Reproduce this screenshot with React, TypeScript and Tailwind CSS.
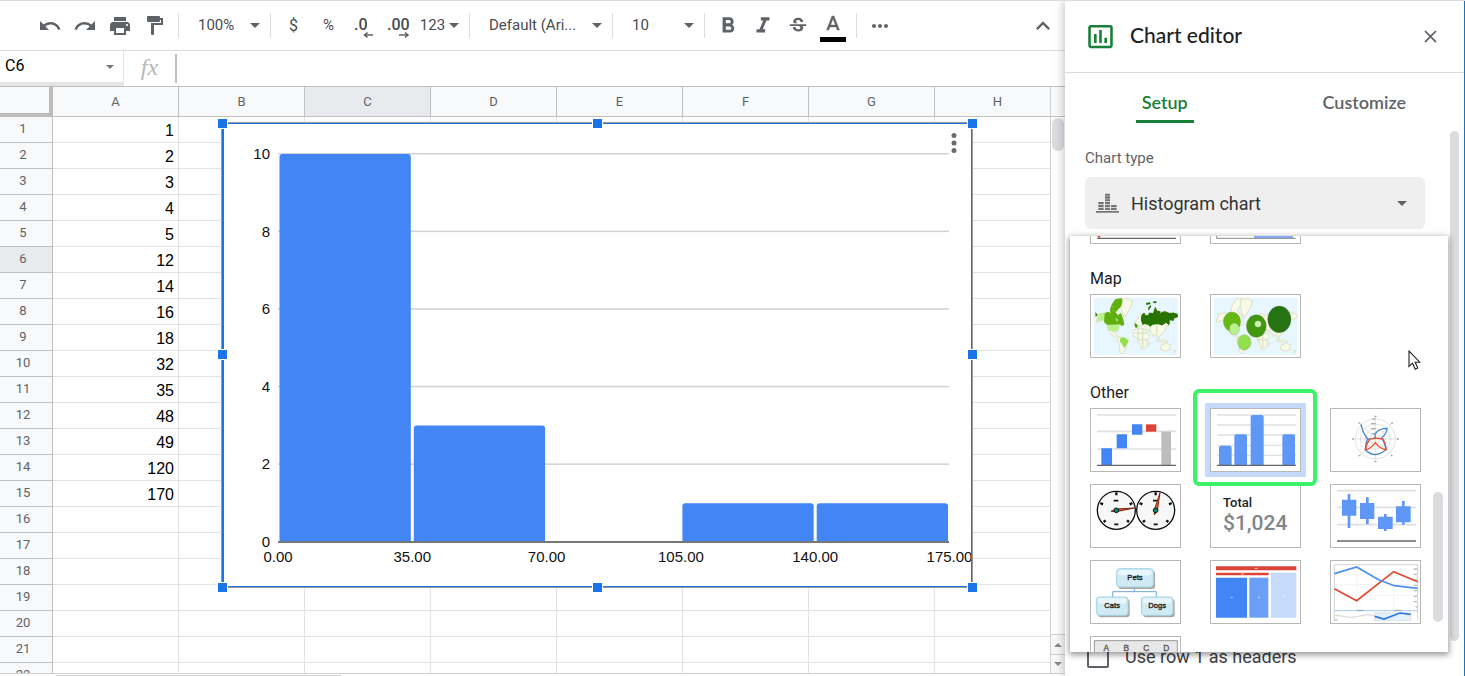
import { useState } from "react";
import type { ReactNode } from "react";
import {
  MdClose,
  MdFormatBold,
  MdFormatItalic,
  MdFormatPaint,
  MdInsertChartOutlined,
  MdKeyboardArrowUp,
  MdMoreHoriz,
  MdPrint,
  MdRedo,
  MdStrikethroughS,
  MdUndo,
} from "react-icons/md";

const COLUMNS = ["A", "B", "C", "D", "E", "F", "G", "H"];
const VALUES = [1, 2, 3, 4, 5, 12, 14, 16, 18, 32, 35, 48, 49, 120, 170];
const ROWS = Array.from({ length: 22 }, (_, i) => i + 1);
const ACTIVE = { column: "C", row: 6 };

// Histogram buckets, 35 wide
const BUCKETS = [10, 3, 0, 1, 1];
const X_TICKS = ["0.00", "35.00", "70.00", "105.00", "140.00", "175.00"];
const Y_TICKS = [0, 2, 4, 6, 8, 10];

const PLOT = { left: 56, right: 727, bottom: 419, bucket: 134.3, unit: 38.8 };

function Caret({ className = "" }: { className?: string }) {
  return (
    <svg viewBox="0 0 10 5" className={`pointer-events-none h-[5px] w-[10px] ${className}`} fill="#5f6368">
      <path d="M0 0h10L5 5z" />
    </svg>
  );
}

function Separator() {
  return <div className="ml-[6px] mr-[5px] h-[25px] w-px shrink-0 bg-[#dadce0]" />;
}

function ToolButton({ label, children }: { label: string; children: ReactNode }) {
  return (
    <button type="button" aria-label={label} className="flex h-9 w-[35px] shrink-0 items-center justify-center">
      {children}
    </button>
  );
}

function ToolSelect({ label, value, className }: { label: string; value: string; className: string }) {
  return (
    <div className={`relative flex shrink-0 items-center ${className}`}>
      <select aria-label={label} className="h-9 w-full appearance-none bg-transparent pr-6 pl-[14px] text-[15px] outline-none">
        <option>{value}</option>
      </select>
      <Caret className="absolute right-1" />
    </div>
  );
}

function Toolbar() {
  return (
    <div className="flex h-[50px] shrink-0 items-center border-b border-[#dadce0] pl-8 text-[#494c50]">
      <ToolButton label="Undo"><MdUndo size={24} color="#5f6368" /></ToolButton>
      <ToolButton label="Redo"><MdRedo size={24} color="#5f6368" /></ToolButton>
      <ToolButton label="Print"><MdPrint size={24} color="#5f6368" /></ToolButton>
      <ToolButton label="Paint format">
        <svg viewBox="0 0 16 19" className="h-[19px] w-4" fill="#5f6368">
          <path d="M1 0h11q1 0 1 1v1h3v7H7v9q0 1-1 1H5q-1 0-1-1V7h10V4h-1v1q0 1-1 1H1Q0 6 0 5V1q0-1 1-1z" />
        </svg>
      </ToolButton>
      <Separator />
      <ToolSelect label="Zoom" value="100%" className="w-20" />
      <Separator />
      <ToolButton label="Format as currency"><span className="text-base">$</span></ToolButton>
      <ToolButton label="Format as percent"><span className="text-[15px]">%</span></ToolButton>
      <ToolButton label="Decrease decimal places">
        <svg viewBox="0 0 26 26" className="size-[26px]">
          <text x="3" y="17" className="text-base font-medium" fill="#494c50">.0</text>
          <path d="M22 22h-8M16.500 19.500l-3 2.500 3 2.500" fill="none" stroke="#5f6368" strokeWidth="1.600" />
        </svg>
      </ToolButton>
      <ToolButton label="Increase decimal places">
        <svg viewBox="0 0 26 26" className="size-[26px]">
          <text x="1" y="17" className="text-base font-medium" fill="#494c50">.00</text>
          <path d="M13 22h8M19 19.500l3 2.500-3 2.500" fill="none" stroke="#5f6368" strokeWidth="1.600" />
        </svg>
      </ToolButton>
      <button type="button" className="flex h-9 w-[47px] shrink-0 items-center justify-center gap-1 text-[15px]">
        123
        <Caret />
      </button>
      <Separator />
      <ToolSelect label="Font" value="Default (Ari..." className="w-[131px]" />
      <Separator />
      <ToolSelect label="Font size" value="10" className="w-20" />
      <Separator />
      <ToolButton label="Bold"><MdFormatBold size={26} color="#5f6368" /></ToolButton>
      <ToolButton label="Italic"><MdFormatItalic size={26} color="#5f6368" /></ToolButton>
      <ToolButton label="Strikethrough"><MdStrikethroughS size={22} color="#5f6368" /></ToolButton>
      <ToolButton label="Text color">
        <svg viewBox="0 0 26 32" className="h-8 w-[26px]">
          <path
            fill="#5f6368"
            stroke="#5f6368"
            strokeWidth=".4"
            d="M12 6 6.500 20h2.250l1.120-3h6.250l1.120 3h2.250L14 6zm-1.380 9L13 8.670 15.380 15z"
          />
          <path fill="#000" d="M0 27h26v5H0z" />
        </svg>
      </ToolButton>
      <Separator />
      <ToolButton label="More"><MdMoreHoriz size={24} color="#5f6368" /></ToolButton>
      <button type="button" aria-label="Hide the menus" className="mr-2 ml-auto">
        <MdKeyboardArrowUp size={28} color="#5f6368" />
      </button>
    </div>
  );
}

function FormulaBar() {
  return (
    <div className="flex h-9 shrink-0 border-b border-[#c0c0c0]">
      <div className="relative flex w-[124px] items-center border-r border-b-4 border-[#e4e4e4]">
        <input aria-label="Name box" defaultValue="C6" className="w-24 pb-px pl-[5px] text-base text-black outline-none" />
        <svg viewBox="0 0 8 4" className="absolute right-[9px] h-1 w-2" fill="#777"><path d="M0 0h8L4 4z" /></svg>
      </div>
      <label htmlFor="formula" className="w-[51px] text-center font-['Liberation_Serif'] text-2xl text-[#b8b8b8] italic">fx</label>
      <input id="formula" className="my-[3px] flex-1 border-l-2 border-[#c0c0c0] px-2 outline-none" />
    </div>
  );
}

const HANDLES = [
  "-left-[5px] -top-[5px]",
  "left-1/2 -ml-[5px] -top-[5px]",
  "-right-[6px] -top-[5px]",
  "-left-[5px] top-1/2 -mt-[6px]",
  "-right-[6px] top-1/2 -mt-[6px]",
  "-left-[5px] -bottom-[6px]",
  "left-1/2 -ml-[5px] -bottom-[6px]",
  "-right-[6px] -bottom-[6px]",
];

function Histogram() {
  return (
    <div className="absolute top-9 left-[222px] h-[464px] w-[750px] bg-white outline outline-[#9a9a9a]">
      <div className="size-full border border-l-2 border-[#1a73e8]">
        <svg viewBox="2 1 747 462" className="size-full" fontFamily="Liberation Sans, sans-serif" fontSize="15" fill="#111">
          {Y_TICKS.map((tick) => {
            const y = PLOT.bottom - tick * PLOT.unit;
            return (
              <g key={tick}>
                <rect x={PLOT.left} y={y - 1} width={PLOT.right - PLOT.left} height="1.500" fill="#d2d2d2" />
                <text x="48" y={y + 5} textAnchor="end">{tick}</text>
              </g>
            );
          })}
          {BUCKETS.map((count, i) => {
            if (!count) return null;
            const x = PLOT.left + 1.5 + i * PLOT.bucket;
            const h = count * PLOT.unit;
            const top = PLOT.bottom - h;
            return (
              <path
                key={i}
                d={`M${x} ${PLOT.bottom}V${top + 3}q0-3 3-3h125.300q3 0 3 3V${PLOT.bottom}z`}
                fill="#4285f4"
              />
            );
          })}
          <rect x={PLOT.left} y={PLOT.bottom - 1} width={PLOT.right - PLOT.left} height="2" fill="#777" />
          {X_TICKS.map((tick, i) => (
            <text key={tick} x={PLOT.left + i * PLOT.bucket} y="439" textAnchor="middle">{tick}</text>
          ))}
        </svg>
      </div>
      <button type="button" aria-label="Chart options" className="absolute top-[10px] right-[13px]">
        <svg viewBox="0 0 10 20" className="h-5 w-[10px]" fill="#6b6b6b">
          <circle cx="5" cy="2.500" r="2.500" /><circle cx="5" cy="10" r="2.500" /><circle cx="5" cy="17.500" r="2.500" />
        </svg>
      </button>
      {HANDLES.map((place) => (
        <div key={place} className={`absolute size-[11px] border border-white bg-[#1a73e8] ${place}`} />
      ))}
    </div>
  );
}

function Sheet() {
  return (
    <div className="flex min-h-0 flex-1">
      <div className="relative min-w-0 flex-1 overflow-hidden border-r border-b border-[#d0d0d0]">
        <table className="w-[1061px] table-fixed border-separate border-spacing-0">
          <thead>
            <tr className="h-[30px] text-[13px] text-[#5f6368]">
              <th aria-label="Select all" className="w-[53px] border-r-4 border-b-4 border-[#bcbcbc] bg-[#f8f9fa]" />
              {COLUMNS.map((name) => (
                <th
                  key={name}
                  className={`w-[126px] border-r border-b border-[#c0c0c0] p-0 font-normal ${name === ACTIVE.column ? "bg-[#e8eaed]" : "bg-[#f8f9fa]"}`}
                >
                  {name}
                </th>
              ))}
            </tr>
          </thead>
          <tbody>
            {ROWS.map((row) => (
              <tr key={row} className="h-[26px]">
                <th
                  className={`border-r border-b border-[#c0c0c0] p-0 pr-[6px] pb-px text-[13px] leading-5 font-normal text-[#5f6368] ${row === ACTIVE.row ? "bg-[#e8eaed]" : "bg-[#f8f9fa]"}`}
                >
                  {row}
                </th>
                {COLUMNS.map((name) => (
                  <td
                    key={name}
                    className="border-r border-b border-[#e2e3e3] p-0 pr-1 text-right align-bottom font-['Liberation_Sans'] text-base leading-[22px] text-black"
                  >
                    {name === "A" ? VALUES[row - 1] : null}
                  </td>
                ))}
              </tr>
            ))}
          </tbody>
        </table>
        <Histogram />
      </div>
      <div className="flex w-[14px] flex-col border-b border-[#d0d0d0]">
        <div className="h-[30px] border-b border-[#c0c0c0] bg-[#f8f9fa]" />
        <div className="mx-px mt-px h-[33px] rounded-full bg-[#dadce0]" />
        <button type="button" aria-label="Scroll up" className="mt-auto flex h-5 items-center justify-center border-t border-[#d0d0d0] bg-[#f8f8f8]">
          <svg viewBox="0 0 8 4" className="h-1 w-2" fill="#888"><path d="M0 4h8L4 0z" /></svg>
        </button>
        <button type="button" aria-label="Scroll down" className="flex h-[19px] items-center justify-center border-t border-[#d0d0d0] bg-[#f8f8f8]">
          <svg viewBox="0 0 8 4" className="h-1 w-2" fill="#888"><path d="M0 0h8L4 4z" /></svg>
        </button>
      </div>
    </div>
  );
}

const LAND = [
  "M42 72 60 70 78 68 82 48 95 28 112 26 108 46 98 62 112 78 118 106 104 108 100 124 88 127 96 138 106 144 100 147 82 136 70 122 66 104 56 90 44 96 34 98z",
  "M108 32 125 26 142 32 140 50 132 62 120 84 113 72 108 52z",
  "M100 142 112 142 132 150 122 178 112 192 106 192 104 168 98 152z",
  "M144 122 165 116 184 122 196 140 188 150 184 172 172 182 164 160 160 146 146 140z",
  "M150 100 160 84 168 70 176 76 190 76 206 70 212 54 224 66 240 64 278 74 276 84 262 90 252 96 250 106 244 114 238 128 226 136 222 148 214 132 206 142 200 128 188 120 166 116 152 112z",
  "M228 168 244 160 258 166 254 182 240 184 228 178z",
  "M216 148 228 152 240 150 250 156 236 158 220 156z",
  "M268 180 274 184 268 191z",
  "M192 158 196 160 192 170z",
];

const RUSSIA =
  "M172 76 178 70 182 78 192 78 194 70 206 72 212 54 216 64 226 66 224 72 240 66 256 72 266 70 278 74 278 82 268 84 266 92 254 90 252 104 244 98 232 106 220 102 204 104 196 110 190 104 180 102 174 104 170 90z";

function WorldBase() {
  return (
    <>
      <rect x="27" y="24" width="252" height="171" fill="#e8f6ff" />
      {LAND.map((d) => (
        <path key={d} d={d} fill="#f8f9e6" stroke="#dbe3c8" strokeWidth="3" strokeLinejoin="round" />
      ))}
      <path
        d="M150 130h38M160 118v40M174 120v54M162 150h26M196 112v14M216 106v24M150 108h26"
        stroke="#dbe3c8"
        strokeWidth="4"
        fill="none"
      />
    </>
  );
}

function GeoThumb() {
  return (
    <svg viewBox="19 16 267 186" className="size-full">
      <WorldBase />
      <path
        fill="#5fb00f"
        stroke="#5fb00f"
        strokeWidth="3"
        strokeLinejoin="round"
        d="M60 72 70 68 80 72 77 60 82 46 92 30 110 27 112 36 108 50 98 60 92 68 100 78 108 72 114 88 117 105 112 107 106 103 68 104 60 98z"
      />
      <path d="M92 86l8 4-3 6zM84 62l8 4M80 50l8 2" fill="#e8f6ff" stroke="#8fd048" strokeWidth="2" />
      <path fill="#b9f28c" d="M42 72 60 70 58 92 44 94 36 98 40 86zM68 106H104L100 122 86 126 70 121z" />
      <path fill="#94e04c" d="M107 145 118 143 131 152 128 162 118 176 114 166 106 156z" />
      <path fill="#267300" stroke="#267300" strokeWidth="3" strokeLinejoin="round" d={RUSSIA} />
      <path fill="#267300" d="M184 40l12-2 2 5-13 3zM204 36l12-2-2 7-8-1zM190 54l8-8 2 3-8 14zM32 68l7 7-6 8zM248 96l8 2-4 10z" />
      <path fill="#3f9a13" d="M150 100l4 2 5 4-1 8-7-1z" />
    </svg>
  );
}

function GeoMarkersThumb() {
  return (
    <svg viewBox="19 16 267 186" className="size-full">
      <WorldBase />
      <g stroke="#6d7b5a" strokeOpacity=".4" strokeWidth="2">
        <ellipse cx="82" cy="96" rx="26" ry="29" fill="#66b814" />
        <ellipse cx="89" cy="118" rx="15" ry="18" fill="#b9f28c" />
        <ellipse cx="155" cy="109" rx="30" ry="34" fill="#43960f" />
        <circle cx="160" cy="103" r="10" fill="#cdf5b0" />
        <ellipse cx="224" cy="89" rx="35" ry="40" fill="#267314" />
        <ellipse cx="119" cy="158" rx="20" ry="23" fill="#94e04c" />
      </g>
    </svg>
  );
}

function WaterfallThumb() {
  return (
    <svg viewBox="78 117 267 186" className="size-full">
      <path d="M96 135h237M96 184h237M96 237h237" stroke="#e0e0e0" strokeWidth="5" />
      <path fill="#4285f4" d="M109 235h32v50h-32zM155 193h31v42h-31zM201 163h31v31h-31z" />
      <path fill="#db4437" d="M243 163h31v22h-31z" />
      <path fill="#bdbdbd" d="M289 185h29v100h-29z" />
      <path d="M96 286h237" stroke="#666" strokeWidth="4" />
    </svg>
  );
}

function HistogramThumb() {
  return (
    <svg viewBox="438 117 267 186" className="size-full">
      <path d="M456 135h237M456 165h237M456 195h237M456 226h237M456 256h237" stroke="#e0e0e0" strokeWidth="4" />
      <path
        fill="#5e97f6"
        d="M462 285v-52q0-6 6-6h26q6 0 6 6v52zM508 285v-86q0-6 6-6h26q6 0 6 6v86zM557 285V141q0-6 6-6h27q6 0 6 6v144zM652 285v-86q0-6 6-6h26q6 0 6 6v86z"
      />
      <path d="M456 286h237" stroke="#666" strokeWidth="4" />
    </svg>
  );
}

function RadarThumb() {
  return (
    <svg viewBox="798 117 267 186" className="size-full" fill="none">
      <g stroke="#d4d4d4" strokeWidth="2">
        <circle cx="931" cy="207" r="60" /><circle cx="931" cy="207" r="45" /><circle cx="931" cy="207" r="30" /><circle cx="931" cy="207" r="15" />
        <path d="M864 207h136M931 140v134M883 159l98 98M981 159l-98 98" />
      </g>
      <path d="M861 207h6M996 207h6M928 139h7M928 275h7M880 257h6M977 257h6M978 159h6M880 159h6M922 147h9M918 161h14M918 176h14M920 191h12" stroke="#aaa" strokeWidth="4" />
      <path d="M888 163Q892 186 908 207 900 225 902 240 916 254 931 254 950 252 963 238 960 220 950 204 966 190 966 175 944 174 930 192L931 207M908 207h8" stroke="#4a86d8" strokeWidth="4" />
      <path d="M915 207Q904 222 901 239 916 238 931 218 946 238 964 239 962 220 954 207L931 204z" stroke="#e8502e" strokeWidth="4" />
    </svg>
  );
}

function Dial({ cx, needle }: { cx: number; needle: string }) {
  return (
    <g>
      <circle cx={cx} cy="91" r="57" fill="#f7f7f7" stroke="#111" strokeWidth="4" />
      <g stroke="#111" strokeWidth="7">
        <path d={`M${cx} 37v9M${cx - 48} 69l8 4M${cx + 48} 69l-8 4M${cx - 38} 126l6-5M${cx + 38} 126l-6-5`} />
        <path d={`M${cx - 8} 62h14M${cx - 6} 133h12`} strokeWidth="5" />
      </g>
      <path d={needle} fill="#e06040" stroke="#7d2a14" strokeWidth="3" />
      <circle cx={cx} cy="91" r="7" fill="#0d8a74" stroke="#111" strokeWidth="3" />
    </g>
  );
}

function GaugeThumb() {
  return (
    <svg viewBox="78 15 267 186" className="size-full">
      <Dial cx={154} needle="M138 94L154 87 208 84 154 95z" />
      <Dial cx={272} needle="M268 105L268 90 285 38 277 92z" />
    </svg>
  );
}

function CandlestickThumb() {
  return (
    <svg viewBox="798 15 267 186" className="size-full">
      <path d="M816 32h237M816 82h237M816 134h237" stroke="#e0e0e0" strokeWidth="5" />
      <path d="M852 42v102M907 52v81M961 102v51M1015 63v71" stroke="#5e97f6" strokeWidth="8" />
      <path fill="#5e97f6" d="M831 59h43v48h-43zM885 69h43v48h-43zM939 110h44v37h-44zM993 79h44v48h-44z" />
      <path d="M816 183h237" stroke="#666" strokeWidth="4" />
    </svg>
  );
}

const ORG_NODES = [
  { name: "Pets", x: 155, y: 266, w: 110 },
  { name: "Cats", x: 94, y: 351, w: 95 },
  { name: "Dogs", x: 229, y: 351, w: 95 },
];

function OrgThumb() {
  return (
    <svg viewBox="78 243 267 186" className="size-full">
      <path d="M208 322v13M143 352v-17h131v17" stroke="#6fa8d8" strokeWidth="3" fill="none" />
      {ORG_NODES.map(({ name, x, y, w }) => (
        <g key={name}>
          <rect x={x + 5} y={y + 6} width={w} height="55" rx="9" fill="#a8a8a8" />
          <rect x={x} y={y} width={w} height="55" rx="9" fill="#cfeaf3" stroke="#a5d3e4" strokeWidth="3" />
          <rect x={x + 5} y={y + 4} width={w - 10} height="16" rx="6" fill="#e6f6fa" />
          <text x={x + w / 2} y={y + 34} textAnchor="middle" fontSize="23" className="font-['Liberation_Sans']" fill="#222" stroke="#222">
            {name}
          </text>
        </g>
      ))}
    </svg>
  );
}

function TreemapThumb() {
  return (
    <svg viewBox="438 243 267 186" className="size-full">
      <path fill="#db4437" d="M453 259h241v12H453zM453 278h158v8H453z" />
      <path fill="#4285f4" d="M453 293h93v120h-93z" />
      <path fill="#6a9ff7" d="M553 293h57v120h-57z" />
      <path fill="#c6dafc" d="M618 278h76v135h-76z" />
      <path d="M569 265h9M528 282h9M497 352h6M579 352h6M653 346h5" stroke="#fff" strokeWidth="2" />
    </svg>
  );
}

function TimelineThumb() {
  return (
    <svg viewBox="798 243 267 186" className="size-full" fill="none">
      <path d="M808 421V254h250v167" stroke="#bbb" strokeWidth="2" />
      <path d="M808 314h250M808 346h250M808 284h250M875 262v128M986 270v120" stroke="#eee" strokeWidth="2" />
      <path d="M808 392h250" stroke="#b9d2ee" strokeWidth="4" />
      <path d="M876 391h20M988 391h20M808 420h10M928 420h10" stroke="#888" strokeWidth="2" />
      <path d="M1046 267h10M1046 283h10M1046 300h10M1046 316h10M1046 332h10M1046 349h10M1046 365h10M1052 381h4" stroke="#bbb" strokeWidth="4" />
      <path d="M808 326l67 36 111-87 72 30" stroke="#db4a30" strokeWidth="5" />
      <path d="M808 281l67-20 66 38 47 18 70 8" stroke="#4d8ff0" strokeWidth="5" />
      <path d="M929 398h108v24H929z" fill="#e4f0fc" stroke="#ddd" strokeWidth="2" />
      <path d="M810 405l50 8 50-10 18 5" stroke="#ddd" strokeWidth="4" />
      <path d="M929 409l28 8 48-18 32 4" stroke="#2f77e0" strokeWidth="5" />
    </svg>
  );
}

function ScorecardThumb() {
  return (
    <span className="flex size-full flex-col pt-[10px] pl-3 text-left">
      <span className="text-[13px] leading-4 font-medium text-[#202124]">Total</span>
      <span className="text-[21px] leading-6 font-medium text-[#80868b]">$1,024</span>
    </span>
  );
}

function TableThumb() {
  return (
    <svg viewBox="78 471 267 186" className="size-full">
      <path d="M88 482h249v150H88z" fill="#e8e8e8" stroke="#999" strokeWidth="3" />
      {["A", "B", "C", "D"].map((c, i) => (
        <text key={c} x={124 + i * 60} y="512" textAnchor="middle" fontSize="25" className="font-['Liberation_Sans']" fill="#555" stroke="#555">{c}</text>
      ))}
    </svg>
  );
}

function Tile({ label, selected, children }: { label: string; selected?: boolean; children: ReactNode }) {
  return (
    <button
      type="button"
      aria-label={label}
      className={`relative block h-16 w-[91px] border border-[#b7b7b7] bg-white ${selected ? "z-10 ring-5 ring-[#c6dafc]" : ""}`}
    >
      {children}
      {selected && <span className="absolute -top-5 -right-[17px] -bottom-[15px] -left-[18px] rounded-md border-4 border-[#3cf26b]" />}
    </button>
  );
}

function TileGrid({ children }: { children: ReactNode }) {
  return <div className="grid grid-cols-[repeat(3,91px)] gap-x-[29px] gap-y-3">{children}</div>;
}

function ChartTypeMenu() {
  return (
    <div className="absolute top-[163px] right-4 left-[5px] h-[416px] overflow-hidden bg-white shadow-[0_2px_6px_1px_rgba(0,0,0,0.4)]">
      <div className="-mt-14 pl-5">
        <TileGrid>
          <Tile label="Scatter chart">
            <svg viewBox="78 33 267 186" className="size-full">
              <path d="M98 200h8" stroke="#db4437" strokeWidth="5" /><path d="M96 205h237" stroke="#666" strokeWidth="4" />
            </svg>
          </Tile>
          <Tile label="Bubble chart">
            <svg viewBox="438 33 267 186" className="size-full">
              <path d="M567 180h117v25H567z" fill="#82aaf8" /><path d="M455 180v25h237" fill="none" stroke="#888" strokeWidth="3" />
            </svg>
          </Tile>
        </TileGrid>
        <h3 className="mt-[23px] mb-[3px] text-base leading-6 text-[#202124]">Map</h3>
        <TileGrid>
          <Tile label="Geo chart"><GeoThumb /></Tile>
          <Tile label="Geo chart with markers"><GeoMarkersThumb /></Tile>
        </TileGrid>
        <h3 className="mt-[23px] mb-[3px] text-base leading-6 text-[#202124]">Other</h3>
        <TileGrid>
          <Tile label="Waterfall chart"><WaterfallThumb /></Tile>
          <Tile label="Histogram chart" selected><HistogramThumb /></Tile>
          <Tile label="Radar chart"><RadarThumb /></Tile>
          <Tile label="Gauge chart"><GaugeThumb /></Tile>
          <Tile label="Scorecard chart"><ScorecardThumb /></Tile>
          <Tile label="Candlestick chart"><CandlestickThumb /></Tile>
          <Tile label="Organizational chart"><OrgThumb /></Tile>
          <Tile label="Treemap chart"><TreemapThumb /></Tile>
          <Tile label="Timeline chart"><TimelineThumb /></Tile>
          <Tile label="Table chart"><TableThumb /></Tile>
        </TileGrid>
      </div>
      <div className="absolute top-64 right-[5px] h-[130px] w-[10px] rounded-full bg-[#dadce0]" />
      <svg viewBox="0 0 13 20" className="absolute top-[114px] right-[27px] h-5 w-[13px]">
        <path d="M1 1v15.500l3.500-3.300 2.700 6 2.600-1.200-2.600-5.800h4.600z" fill="#fff" stroke="#222" strokeWidth="1.100" />
      </svg>
    </div>
  );
}

function HistogramIcon() {
  return (
    <svg viewBox="93 70 69 60" className="h-5 w-[23px] shrink-0" fill="#757575">
      <path d="M120 72h15v6h-15zM120 80h15v7h-15zM120 89h15v6h-15zM120 97h15v7h-15zM120 106h15v6h-15zM120 114h15v7h-15z" />
      <path d="M100 97h16v7h-16zM100 106h16v6h-16zM100 114h16v7h-16zM138 106h17v6h-17zM138 114h17v7h-17zM93 124h69v5H93z" />
    </svg>
  );
}

function ChartEditor() {
  const [tab, setTab] = useState("Setup");

  return (
    <aside className="z-10 flex w-[400px] shrink-0 flex-col overflow-hidden border-r border-[#1a73b8] bg-white shadow-[0_0_10px_rgba(0,0,0,0.3)]">
      <header className="flex h-[72px] shrink-0 items-center border-b border-[#dadce0] pr-[23px] pl-5">
        <MdInsertChartOutlined size={31} color="#188038" />
        <h2 className="ml-[14px] pb-1 font-['Lato'] text-[21px] font-medium text-[#202124]">Chart editor</h2>
        <button type="button" aria-label="Close" className="ml-auto"><MdClose size={21} color="#5f6368" /></button>
      </header>
      <div className="relative flex min-h-0 flex-1 flex-col">
        <div role="tablist" className="flex shrink-0 font-['Lato'] text-lg font-semibold">
          {["Setup", "Customize"].map((name) => (
            <button
              key={name}
              type="button"
              role="tab"
              aria-selected={tab === name}
              onClick={() => setTab(name)}
              className="flex h-[50px] flex-1 justify-center"
            >
              <span className={`flex h-full items-center border-b-3 px-[6px] pt-[10px] ${tab === name ? "border-[#188038] text-[#188038]" : "border-transparent text-[#5f6368]"}`}>
                {name}
              </span>
            </button>
          ))}
        </div>
        <div className="flex min-h-0 flex-1 flex-col pt-6 pr-[39px] pl-5">
          <label htmlFor="chart-type" className="text-[15px] leading-[22px] text-[#5f6368]">Chart type</label>
          <div className="relative mt-2 flex h-[52px] shrink-0 items-center rounded-md bg-[#efefef] pl-[11px]">
            <HistogramIcon />
            <select id="chart-type" className="absolute inset-0 appearance-none pt-px pl-[46px] text-lg text-[#333] outline-none">
              <option>Histogram chart</option>
            </select>
            <Caret className="absolute right-[18px]" />
          </div>
          <label className="mt-[416px] flex items-center gap-4 text-lg leading-6 text-[#3c4043]">
            <input type="checkbox" className="ml-[2px] size-[22px] appearance-none rounded-xs border-2 border-[#5f6368]" />
            Use row 1 as headers
          </label>
        </div>
        <div className="absolute top-[58px] right-[5px] h-[510px] w-[9px] rounded-full bg-[#dadce0]" />
        <ChartTypeMenu />
      </div>
    </aside>
  );
}

export default function App() {
  return (
    <div className="flex h-screen overflow-hidden border-t border-[#dadce0] bg-white font-['Roboto']">
      <main className="flex min-w-0 flex-1 flex-col">
        <Toolbar />
        <FormulaBar />
        <Sheet />
        <div className="flex h-[2px] shrink-0 items-end">
          <div className="ml-14 h-px w-[285px] bg-[#d0d0d0]" />
        </div>
      </main>
      <ChartEditor />
    </div>
  );
}
